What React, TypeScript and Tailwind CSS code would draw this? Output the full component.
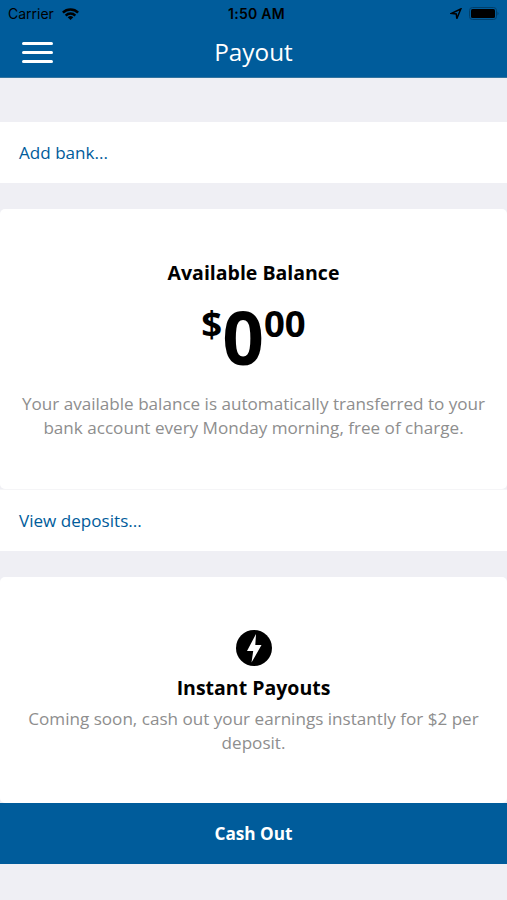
export default function App() {
  return (
    <div className="flex h-[900px] w-[507px] flex-col overflow-hidden bg-[#efeff4] font-['Open_Sans',sans-serif] text-black">
      <header className="h-[78px] border-b border-[#33749f] bg-[#005c9b]">
        <div className="grid h-[27px] grid-cols-3 items-center px-2 font-['Inter',sans-serif] text-[14px] leading-[27px]">
          <div className="flex items-center gap-2">
            <span className="text-[14px]">Carrier</span>
            <svg width="17" height="12" viewBox="0 0 17 12" fill="none" stroke="#000" strokeWidth="2.5">
              <path d="M.9 4.7a10.8 10.8 0 0 1 15.2 0" />
              <path d="M3.7 7.6a6.8 6.8 0 0 1 9.6 0" />
              <path d="M8.5 12 5.7 9.3a4 4 0 0 1 5.6 0z" fill="#000" stroke="none" />
            </svg>
          </div>
          <span className="whitespace-nowrap pl-[6px] text-center font-semibold tracking-[0.3px]">1:50 AM</span>
          <div className="flex items-center justify-end gap-[7px]">
            <svg width="12" height="12" viewBox="0 0 12 12" fill="none" stroke="#000" strokeWidth="1.5">
              <path d="M10.8 1 1.5 5.4l4.8.5.5 4.8z" />
            </svg>
            <svg width="30" height="13" viewBox="0 0 30 13">
              <rect x=".5" y=".5" width="27" height="12" rx="3" fill="none" stroke="#003f6a" />
              <rect x="2" y="2" width="24" height="9" rx="1.5" />
              <path d="M28.5 4.5q2 2 0 4z" fill="#003f6a" />
            </svg>
          </div>
        </div>
        <div className="grid h-[50px] grid-cols-3 items-center px-[22px] text-white">
          <div className="flex w-[31px] flex-col gap-[6px]">
            <span className="h-[3px] rounded bg-white" />
            <span className="h-[3px] rounded bg-white" />
            <span className="h-[3px] rounded bg-white" />
          </div>
          <h1 className="text-center text-[24.3px] leading-[50px]">Payout</h1>
        </div>
      </header>
      <button className="mt-11 h-[61px] bg-white px-[19px] text-left text-[17.1px] leading-[25px] text-[#005c9b]">Add bank...</button>
      <section className="mt-[26px] flex h-[280px] flex-col items-center rounded-[5px] bg-white text-center">
        <h2 className="mt-[51px] text-[19.5px] font-bold leading-[26px]">Available Balance</h2>
        <div className="mt-[6px] flex h-[89px] items-start font-bold">
          <span className="text-[36.5px] leading-[62px]">$</span>
          <span className="text-[73px] leading-[90px]">0</span>
          <span className="text-[36.5px] leading-[62px]">00</span>
        </div>
        <p className="mt-[11px] whitespace-nowrap text-[17.1px] leading-[23.5px] text-[#8e8e8e]">
          Your available balance is automatically transferred to your
          <br />
          bank account every Monday morning, free of charge.
        </p>
      </section>
      <button className="h-[62px] border-t border-[#f5f5f7] bg-white px-[19px] text-left text-[17.1px] leading-[25px] text-[#005c9b]">View deposits...</button>
      <section className="mt-[26px] flex h-[226px] flex-col items-center rounded-[5px] bg-white text-center">
        <svg className="mt-[53px]" width="36" height="36" viewBox="0 0 36 36">
          <circle cx="18" cy="18" r="18" />
          <path d="M20 4 11 21h6.2l-1.7 11.5L25.5 15h-6.2z" fill="#fff" />
        </svg>
        <h2 className="mt-[9px] text-[19.5px] font-bold leading-[26px]">Instant Payouts</h2>
        <p className="mt-[6px] whitespace-nowrap text-[17.1px] leading-[23.5px] text-[#8e8e8e]">
          Coming soon, cash out your earnings instantly for $2 per
          <br />
          deposit.
        </p>
      </section>
      <button className="h-[61px] bg-[#005c9b] pt-px text-center text-[17.2px] font-bold text-white">Cash Out</button>
    </div>
  );
}
